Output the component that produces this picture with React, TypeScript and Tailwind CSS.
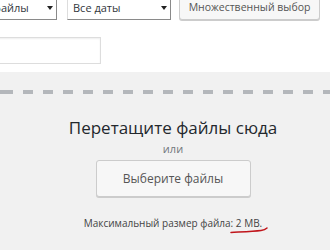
const Arrow = () => (
  <svg width="6" height="4" viewBox="0 0 6 4">
    <path d="M0 0h6L3 4z" fill="#222" />
  </svg>
);

const Select = ({ label, className }: { label: string; className: string }) => (
  <div
    className={`flex h-[24px] shrink-0 items-center justify-between border border-[#ddd] border-r-[#8a8a8a] border-b-[#8a8a8a] bg-white pl-[5px] pr-[3px] text-[11px] text-[#32373c] ${className}`}
  >
    <span className="whitespace-nowrap">{label}</span>
    <Arrow />
  </div>
);

export default function App() {
  return (
    <div className="h-[250px] w-[330px] overflow-hidden bg-white font-['Open_Sans',sans-serif]">
      {/* filters */}
      <div className="-mt-[4px] flex items-start">
        <Select label="Все медиафайлы" className="-ml-[68px] w-[125px]" />
        <Select label="Все даты" className="ml-[10px] w-[104px]" />
        <button className="ml-[8px] flex h-[24px] w-[141px] shrink-0 items-center justify-center rounded-[3px] border border-[#ccc] bg-[#f7f7f7] text-[10.5px] whitespace-nowrap text-[#555] shadow-[0_1px_0_#ccc]">
          Множественный выбор
        </button>
      </div>

      {/* search */}
      <div className="-ml-[50px] mt-[17px] h-[27px] w-[151px] border border-[#ddd] bg-white shadow-[inset_0_1px_2px_rgba(0,0,0,0.07)]" />

      {/* upload area */}
      <div className="mt-[8px] h-[200px] bg-[#f1f1f1] pt-[18px]">
        <div className="h-[4px] w-full bg-[repeating-linear-gradient(to_right,#b4b7bb_0_10px,transparent_10px_20px)] bg-[position:3px_0]" />
        <div className="flex flex-col items-center pl-4">
          <p className="mt-[22px] text-[17px] leading-[24px] text-[#23282d]">Перетащите файлы сюда</p>
          <p className="mt-[2px] text-[11px] leading-[14px] text-[#72777c]">или</p>
          <button className="mt-[4px] h-[37px] w-[155px] rounded-[3px] border border-[#ccc] bg-[#f7f7f7] text-[12px] text-[#555] shadow-[0_1px_0_#ccc]">
            Выберите файлы
          </button>
          <p className="mt-[19px] text-[10px] leading-[14px] text-[#444]">
            Максимальный размер файла:{" "}
            <span className="relative">
              2 MB.
              <svg
                className="absolute top-[10px] -left-[6px]"
                width="38"
                height="8"
                viewBox="0 0 38 8"
              >
                <path
                  d="M1 6.5C10 6 23 5.6 31 4.6C34 4.2 36 3 37 2"
                  fill="none"
                  stroke="#c0151b"
                  strokeWidth="1.5"
                  strokeLinecap="round"
                />
              </svg>
            </span>
          </p>
        </div>
      </div>
    </div>
  );
}
